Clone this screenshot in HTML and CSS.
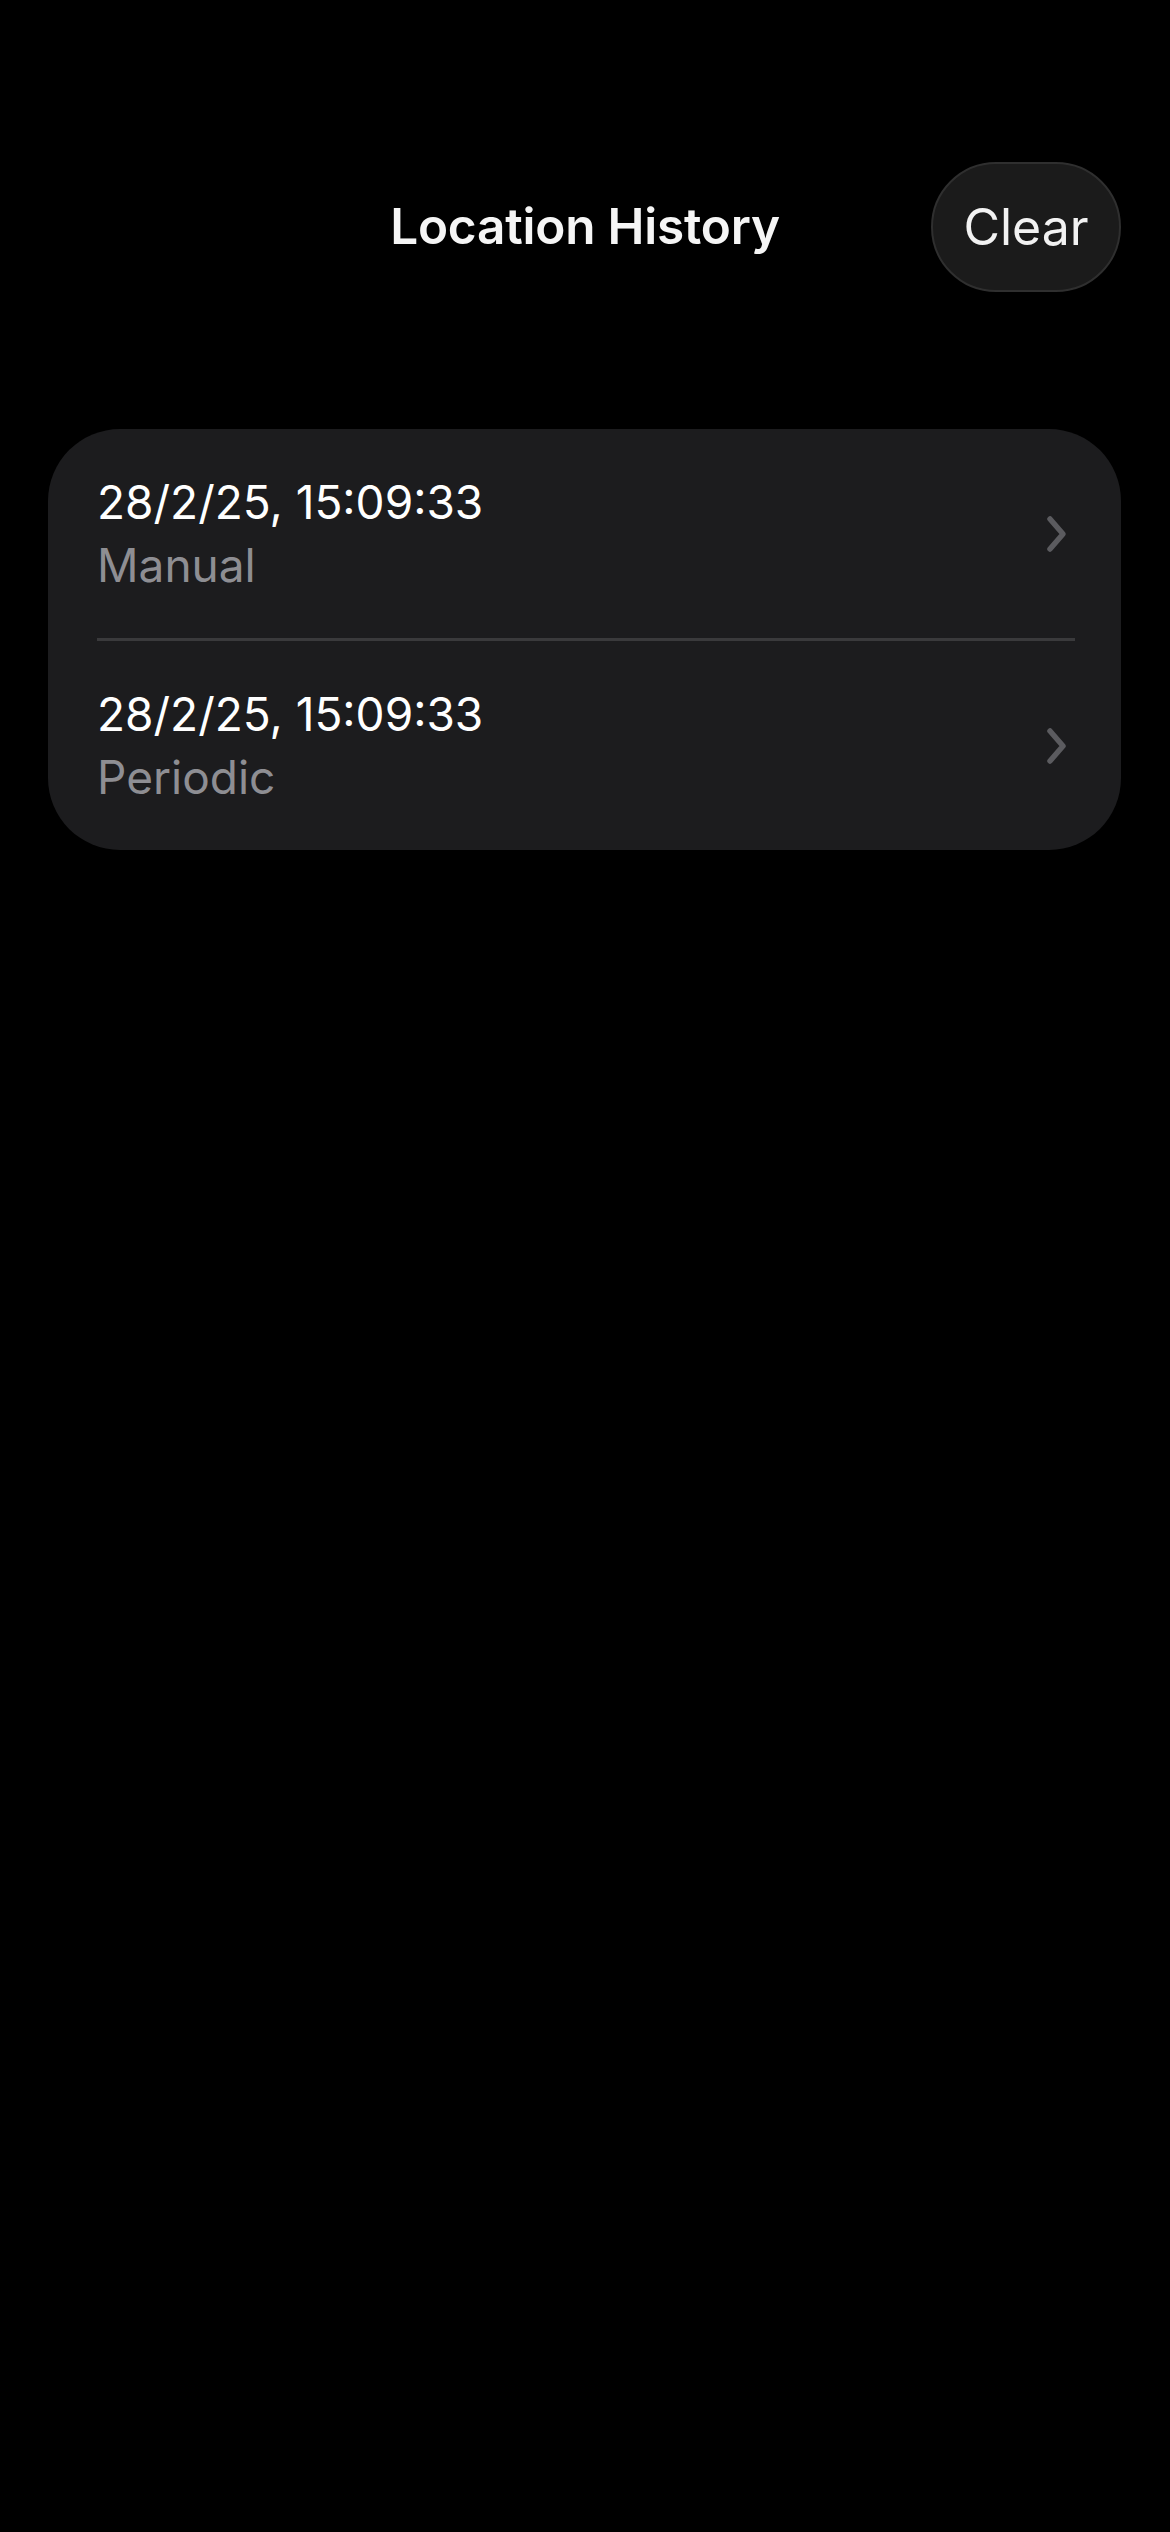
FILE: index.html
```html
<!DOCTYPE html>
<html lang="en">
<head>
<meta charset="utf-8">
<title>Location History</title>
<link rel="stylesheet" href="styles.css">
</head>
<body>
<div class="screen">
  <header class="nav">
    <div class="nav-side"></div>
    <h1 class="nav-title">Location History</h1>
    <div class="nav-side nav-right">
      <button class="glass-btn" type="button">Clear</button>
    </div>
  </header>

  <ul class="list">
    <li class="row">
      <div class="row-text">
        <div class="row-title">28/2/25, 15:09:33</div>
        <div class="row-sub">Manual</div>
      </div>
      <svg class="chevron" width="24" height="40" viewBox="0 0 24 40" aria-hidden="true">
        <path d="M5 5 L18 20 L5 35" fill="none" stroke="#5b5b5f" stroke-width="5.5" stroke-linecap="round" stroke-linejoin="round"/>
      </svg>
    </li>
    <li class="divider" aria-hidden="true"></li>
    <li class="row">
      <div class="row-text">
        <div class="row-title">28/2/25, 15:09:33</div>
        <div class="row-sub">Periodic</div>
      </div>
      <svg class="chevron" width="24" height="40" viewBox="0 0 24 40" aria-hidden="true">
        <path d="M5 5 L18 20 L5 35" fill="none" stroke="#5b5b5f" stroke-width="5.5" stroke-linecap="round" stroke-linejoin="round"/>
      </svg>
    </li>
  </ul>
</div>
</body>
</html>
```

FILE: styles.css
```css
* {
  box-sizing: border-box;
}

html, body {
  margin: 0;
  padding: 0;
  background: #000;
}

body {
  width: 1170px;
  min-height: 2532px;
  font-family: Inter, "Noto Sans", "Liberation Sans", sans-serif;
  color: #fff;
}

.screen {
  padding-top: 162px;
}

.nav {
  display: grid;
  grid-template-columns: 1fr auto 1fr;
  align-items: center;
  height: 130px;
  padding: 0 49px;
}

.nav-title {
  margin: 0;
  font-size: 49.5px;
  font-weight: 600;
  letter-spacing: -0.2px;
  color: #f5f5f5;
  line-height: 1;
}

.nav-right {
  display: flex;
  justify-content: flex-end;
}

.glass-btn {
  width: 190px;
  height: 130px;
  border-radius: 65px;
  background: #1b1b1b;
  border: 2px solid #2f2f2f;
  color: #f2f2f2;
  font-family: inherit;
  font-size: 50px;
  font-weight: 400;
  padding: 0;
  line-height: 1;
}

.list {
  list-style: none;
  margin: 137px 49px 0 48px;
  padding: 0;
  background: #1c1c1e;
  border-radius: 72px;
}

.row {
  display: flex;
  align-items: center;
  justify-content: space-between;
  height: 209px;
  padding: 0 50px 0 49px;
}

.row-text {
  display: flex;
  flex-direction: column;
}

.row-title {
  font-size: 46px;
  line-height: 63px;
  color: #fff;
}

.row-sub {
  font-size: 46px;
  line-height: 63px;
  color: #8e8e93;
}

.chevron {
  display: block;
  margin-right: 2px;
}

.divider {
  height: 3px;
  background: #3a3a3c;
  margin: 0 46px 0 49px;
}
```
